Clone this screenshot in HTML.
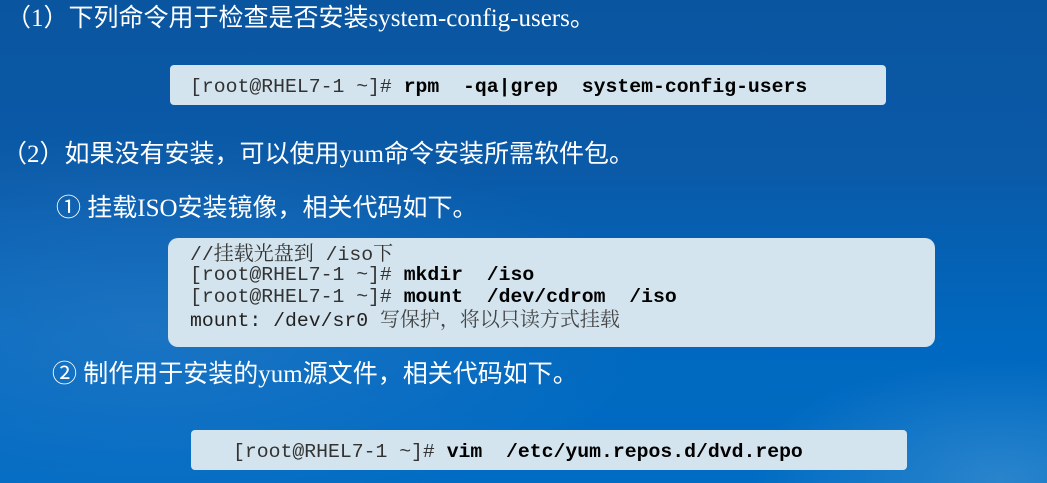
<!DOCTYPE html>
<html><head><meta charset="utf-8"><style>
body{margin:0;width:1047px;height:483px;overflow:hidden;position:relative;
background:radial-gradient(ellipse 250px 120px at 1000px 480px,#2a84cc 0%,rgba(0,108,196,0) 100%),radial-gradient(ellipse 500px 200px at 150px 330px,rgba(60,130,200,0.45),rgba(0,0,0,0) 100%),linear-gradient(180deg,#0a55a0 0%,#0a5aa8 35%,#0068bf 70%,#006cc4 100%);
font-family:"Liberation Serif","Noto Sans CJK SC",serif;color:#fff;}
.t{position:absolute;font-size:25px;white-space:nowrap;line-height:1;}
.box{position:absolute;background:#d3e4ee;border-radius:4px;}
.code{position:absolute;font-family:"Liberation Mono","Noto Serif CJK SC",monospace;font-size:19.8px;color:#222;white-space:pre;line-height:22px;}
.code div{height:22px;}
.code b{color:#000;}
.code .p{color:#333;}
.cjk{font-family:"Noto Serif CJK SC",serif;font-size:20px;line-height:1;}
</style></head><body>
<div class="t" style="left:6px;top:6px">（1）下列命令用于检查是否安装system-config-users。</div>
<div class="box" style="left:170px;top:65px;width:716px;height:40px"></div>
<div class="code" style="left:190px;top:76px"><span class="p">[root@RHEL7-1 ~]#</span> <b>rpm  -qa|grep  system-config-users</b></div>
<div class="t" style="left:2px;top:142px">（2）如果没有安装，可以使用yum命令安装所需软件包。</div>
<div class="t" style="left:56px;top:196px">① 挂载ISO安装镜像，相关代码如下。</div>
<div class="box" style="left:168px;top:238px;width:767px;height:109px;border-radius:10px"></div>
<div class="code" style="left:190px;top:242px"><div class="p">//<span class="cjk">挂载光盘到</span> /iso<span class="cjk">下</span></div><div><span class="p">[root@RHEL7-1 ~]#</span> <b>mkdir  /iso</b></div><div><span class="p">[root@RHEL7-1 ~]#</span> <b>mount  /dev/cdrom  /iso</b></div><div>mount: /dev/sr0 <span class="cjk" style="color:#444">写保护，将以只读方式挂载</span></div></div>
<div class="t" style="left:52px;top:362px">② 制作用于安装的yum源文件，相关代码如下。</div>
<div class="box" style="left:191px;top:430px;width:716px;height:40px"></div>
<div class="code" style="left:233px;top:441px"><span class="p">[root@RHEL7-1 ~]#</span> <b>vim  /etc/yum.repos.d/dvd.repo</b></div>
</body></html>
